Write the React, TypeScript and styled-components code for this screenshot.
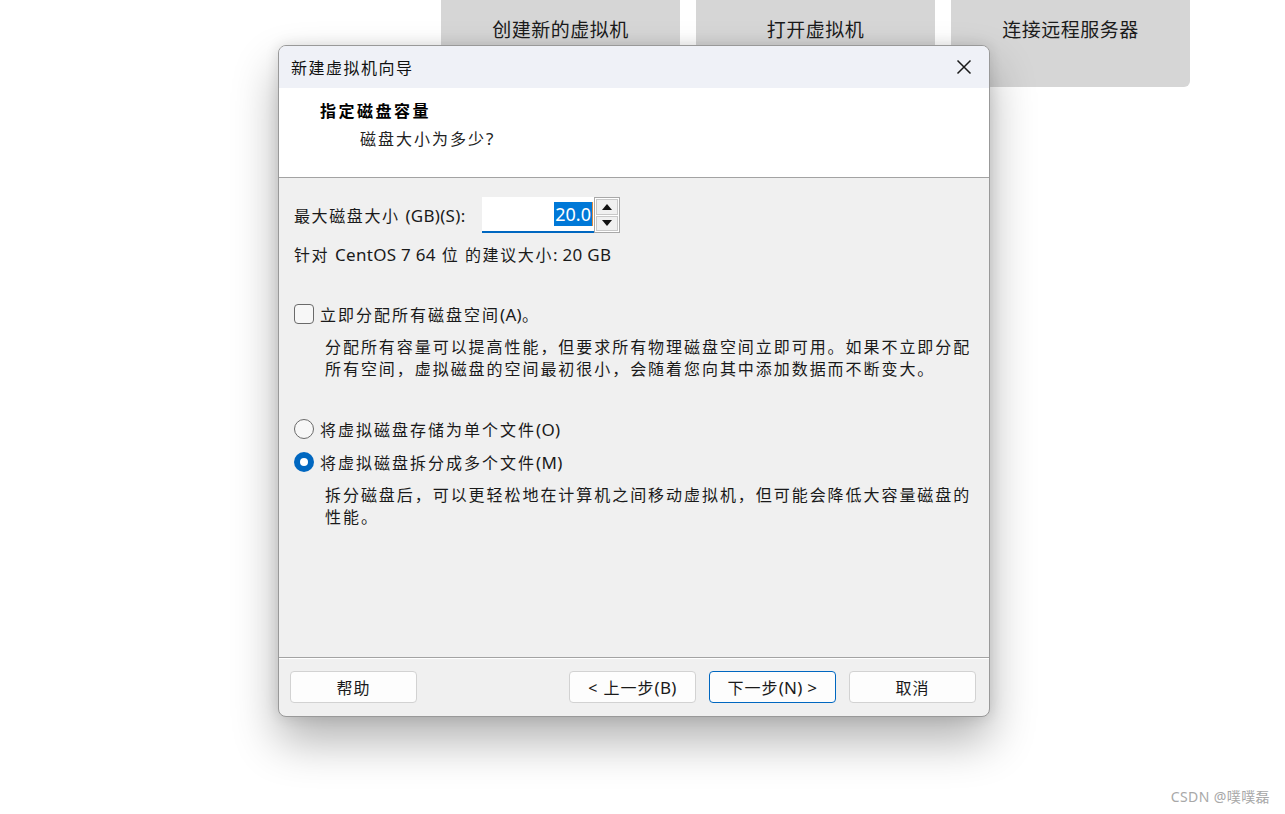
import React from "react";
import styled, { createGlobalStyle } from "styled-components";

const Global = createGlobalStyle`
  html, body { margin: 0; padding: 0; background: #ffffff; }
  body { width: 1285px; height: 814px; overflow: hidden; font-family: "Noto Sans", "Noto Sans CJK SC", sans-serif; }
  * { box-sizing: border-box; }
`;

const FONT = `"Noto Sans", "Noto Sans CJK SC", sans-serif`;

const Page = styled.div`
  position: relative;
  width: 1285px;
  height: 814px;
  background: #ffffff;
`;

const CardRow = styled.div`
  display: flex;
  gap: 16px;
  padding-left: 441px;
`;

const TopCard = styled.div`
  width: 239px;
  height: 87px;
  background: #d6d6d6;
  border-radius: 0 0 6px 6px;
  display: flex;
  justify-content: center;
  padding-top: 15px;
  font-family: ${FONT};
  font-size: 19px;
  color: #1b1b1b;
  letter-spacing: 0.5px;
`;

const Dialog = styled.div`
  position: absolute;
  left: 278px;
  top: 45px;
  width: 712px;
  height: 672px;
  border: 1px solid #999999;
  border-radius: 8px;
  overflow: hidden;
  background: #f0f0f0;
  box-shadow: 0 24px 46px rgba(0, 0, 0, 0.3), 0 0 14px rgba(0, 0, 0, 0.12);
  display: flex;
  flex-direction: column;
  font-family: ${FONT};
  color: #000;
`;

const TitleBar = styled.div`
  height: 42px;
  flex: none;
  background: #eff1f7;
  display: flex;
  align-items: center;
  justify-content: space-between;
  padding: 0 13px 0 12px;
  font-size: 16px;
  letter-spacing: 1.5px;
  color: #111;
`;

const CloseBtn = styled.div`
  width: 24px;
  height: 24px;
  display: flex;
  align-items: center;
  justify-content: center;
`;

const Header = styled.div`
  height: 90px;
  flex: none;
  background: #ffffff;
  border-bottom: 1px solid #a3a3a3;
  padding: 12px 0 0 41px;
  display: flex;
  flex-direction: column;
`;

const HeaderTitle = styled.div`
  font-size: 16px;
  font-weight: 700;
  letter-spacing: 2.5px;
  line-height: 22px;
  color: #000;
`;

const HeaderSub = styled.div`
  font-size: 16px;
  letter-spacing: 2px;
  line-height: 22px;
  margin-top: 6px;
  padding-left: 40px;
  color: #222;
`;

const Body = styled.div`
  flex: 1;
  padding: 19px 14px 0 15px;
  display: flex;
  flex-direction: column;
  border-bottom: 1px solid #a3a3a3;
`;

const SizeRow = styled.div`
  display: flex;
  align-items: center;
  height: 36px;
`;

const Label = styled.span`
  width: 188px;
  flex: none;
  font-size: 16px;
  letter-spacing: 1.6px;
  color: #1a1a1a;
`;

const Latin = styled.span`
  font-size: 17px;
  letter-spacing: 0.3px;
`;

const NumberInput = styled.div`
  width: 112px;
  height: 36px;
  background: #ffffff;
  border-bottom: 2px solid #0067c0;
  display: flex;
  align-items: center;
  justify-content: flex-end;
  padding-right: 1px;
`;

const Selected = styled.span`
  background: #0078d7;
  color: #ffffff;
  font-size: 18px;
  line-height: 24px;
  padding: 0 1px;
  border-right: 1px solid #e08a3c;
`;

const Spinner = styled.div`
  width: 26px;
  height: 36px;
  border: 1px solid #a8a8a8;
  display: flex;
  flex-direction: column;
  background: #ffffff;
  padding: 1px;
  gap: 1px;
`;

const SpinBtn = styled.div`
  flex: 1;
  background: #f0f0f0;
  border: 1px solid #c8c8c8;
  display: flex;
  align-items: center;
  justify-content: center;
`;

const Info = styled.div`
  font-size: 16px;
  letter-spacing: 1.6px;
  margin-top: 9px;
  line-height: 26px;
  color: #1a1a1a;
`;

const OptionRow = styled.div<{ $mt: number }>`
  display: flex;
  align-items: center;
  gap: 6px;
  margin-top: ${(p) => p.$mt}px;
  height: 24px;
  font-size: 16px;
  letter-spacing: 2px;
  color: #1a1a1a;
`;

const Check = styled.div`
  width: 20px;
  height: 20px;
  border: 1px solid #6a6a6a;
  border-radius: 4px;
  background: #f7f7f7;
  flex: none;
`;

const Radio = styled.div<{ $on?: boolean }>`
  width: 20px;
  height: 20px;
  border-radius: 50%;
  flex: none;
  border: ${(p) => (p.$on ? "none" : "1px solid #6a6a6a")};
  background: ${(p) => (p.$on ? "#0067c0" : "#f7f7f7")};
  display: flex;
  align-items: center;
  justify-content: center;
  &::after {
    content: "";
    display: ${(p) => (p.$on ? "block" : "none")};
    width: 8px;
    height: 8px;
    border-radius: 50%;
    background: #ffffff;
  }
`;

const Desc = styled.div`
  padding-left: 31px;
  margin-top: 10px;
  font-size: 16px;
  letter-spacing: 1.95px;
  line-height: 22px;
  color: #1a1a1a;
`;

const Footer = styled.div`
  height: 58px;
  flex: none;
  border-top: 1px solid #ffffff;
  display: flex;
  align-items: flex-start;
  padding: 12px 13px 0 11px;
  gap: 13px;
`;

const Spacer = styled.div`
  flex: 1;
`;

const Button = styled.div<{ $primary?: boolean }>`
  width: 127px;
  height: 32px;
  border-radius: 4px;
  background: #fdfdfd;
  border: 1px solid ${(p) => (p.$primary ? "#0067c0" : "#d2d2d2")};
  display: flex;
  align-items: center;
  justify-content: center;
  font-size: 16px;
  letter-spacing: 1px;
  color: #1a1a1a;
`;

const Watermark = styled.div`
  position: absolute;
  right: 15px;
  bottom: 8px;
  font-family: ${FONT};
  font-size: 14px;
  letter-spacing: 0.4px;
  color: #a8a8a8;
`;

const Tri = ({ up }: { up?: boolean }) => (
  <svg width="10" height="6" viewBox="0 0 10 6">
    <polygon points={up ? "0,6 10,6 5,0" : "0,0 10,0 5,6"} fill="#111" />
  </svg>
);

export default function App() {
  return (
    <Page>
      <Global />
      <CardRow>
        <TopCard>创建新的虚拟机</TopCard>
        <TopCard>打开虚拟机</TopCard>
        <TopCard>连接远程服务器</TopCard>
      </CardRow>
      <Dialog>
        <TitleBar>
          <span>新建虚拟机向导</span>
          <CloseBtn>
            <svg width="16" height="16" viewBox="0 0 16 16">
              <path d="M1.5 1.5 L14.5 14.5 M14.5 1.5 L1.5 14.5" stroke="#1a1a1a" strokeWidth="1.5" fill="none" />
            </svg>
          </CloseBtn>
        </TitleBar>
        <Header>
          <HeaderTitle>指定磁盘容量</HeaderTitle>
          <HeaderSub>磁盘大小为多少<Latin>?</Latin></HeaderSub>
        </Header>
        <Body>
          <SizeRow>
            <Label>最大磁盘大小 <Latin>(GB)(S):</Latin></Label>
            <NumberInput>
              <Selected>20.0</Selected>
            </NumberInput>
            <Spinner>
              <SpinBtn><Tri up /></SpinBtn>
              <SpinBtn><Tri /></SpinBtn>
            </Spinner>
          </SizeRow>
          <Info>针对 <Latin>CentOS 7 64</Latin> 位 的建议大小<Latin>: 20 GB</Latin></Info>
          <OptionRow $mt={34}>
            <Check />
            <span>立即分配所有磁盘空间<Latin>(A)</Latin>。</span>
          </OptionRow>
          <Desc>
            分配所有容量可以提高性能，但要求所有物理磁盘空间立即可用。如果不立即分配
            <br />
            所有空间，虚拟磁盘的空间最初很小，会随着您向其中添加数据而不断变大。
          </Desc>
          <OptionRow $mt={37}>
            <Radio />
            <span>将虚拟磁盘存储为单个文件<Latin>(O)</Latin></span>
          </OptionRow>
          <OptionRow $mt={9}>
            <Radio $on />
            <span>将虚拟磁盘拆分成多个文件<Latin>(M)</Latin></span>
          </OptionRow>
          <Desc>
            拆分磁盘后，可以更轻松地在计算机之间移动虚拟机，但可能会降低大容量磁盘的
            <br />
            性能。
          </Desc>
        </Body>
        <Footer>
          <Button>帮助</Button>
          <Spacer />
          <Button>&lt; 上一步<Latin>(B)</Latin></Button>
          <Button $primary>下一步<Latin>(N) &gt;</Latin></Button>
          <Button>取消</Button>
        </Footer>
      </Dialog>
      <Watermark>CSDN @噗噗磊</Watermark>
    </Page>
  );
}
